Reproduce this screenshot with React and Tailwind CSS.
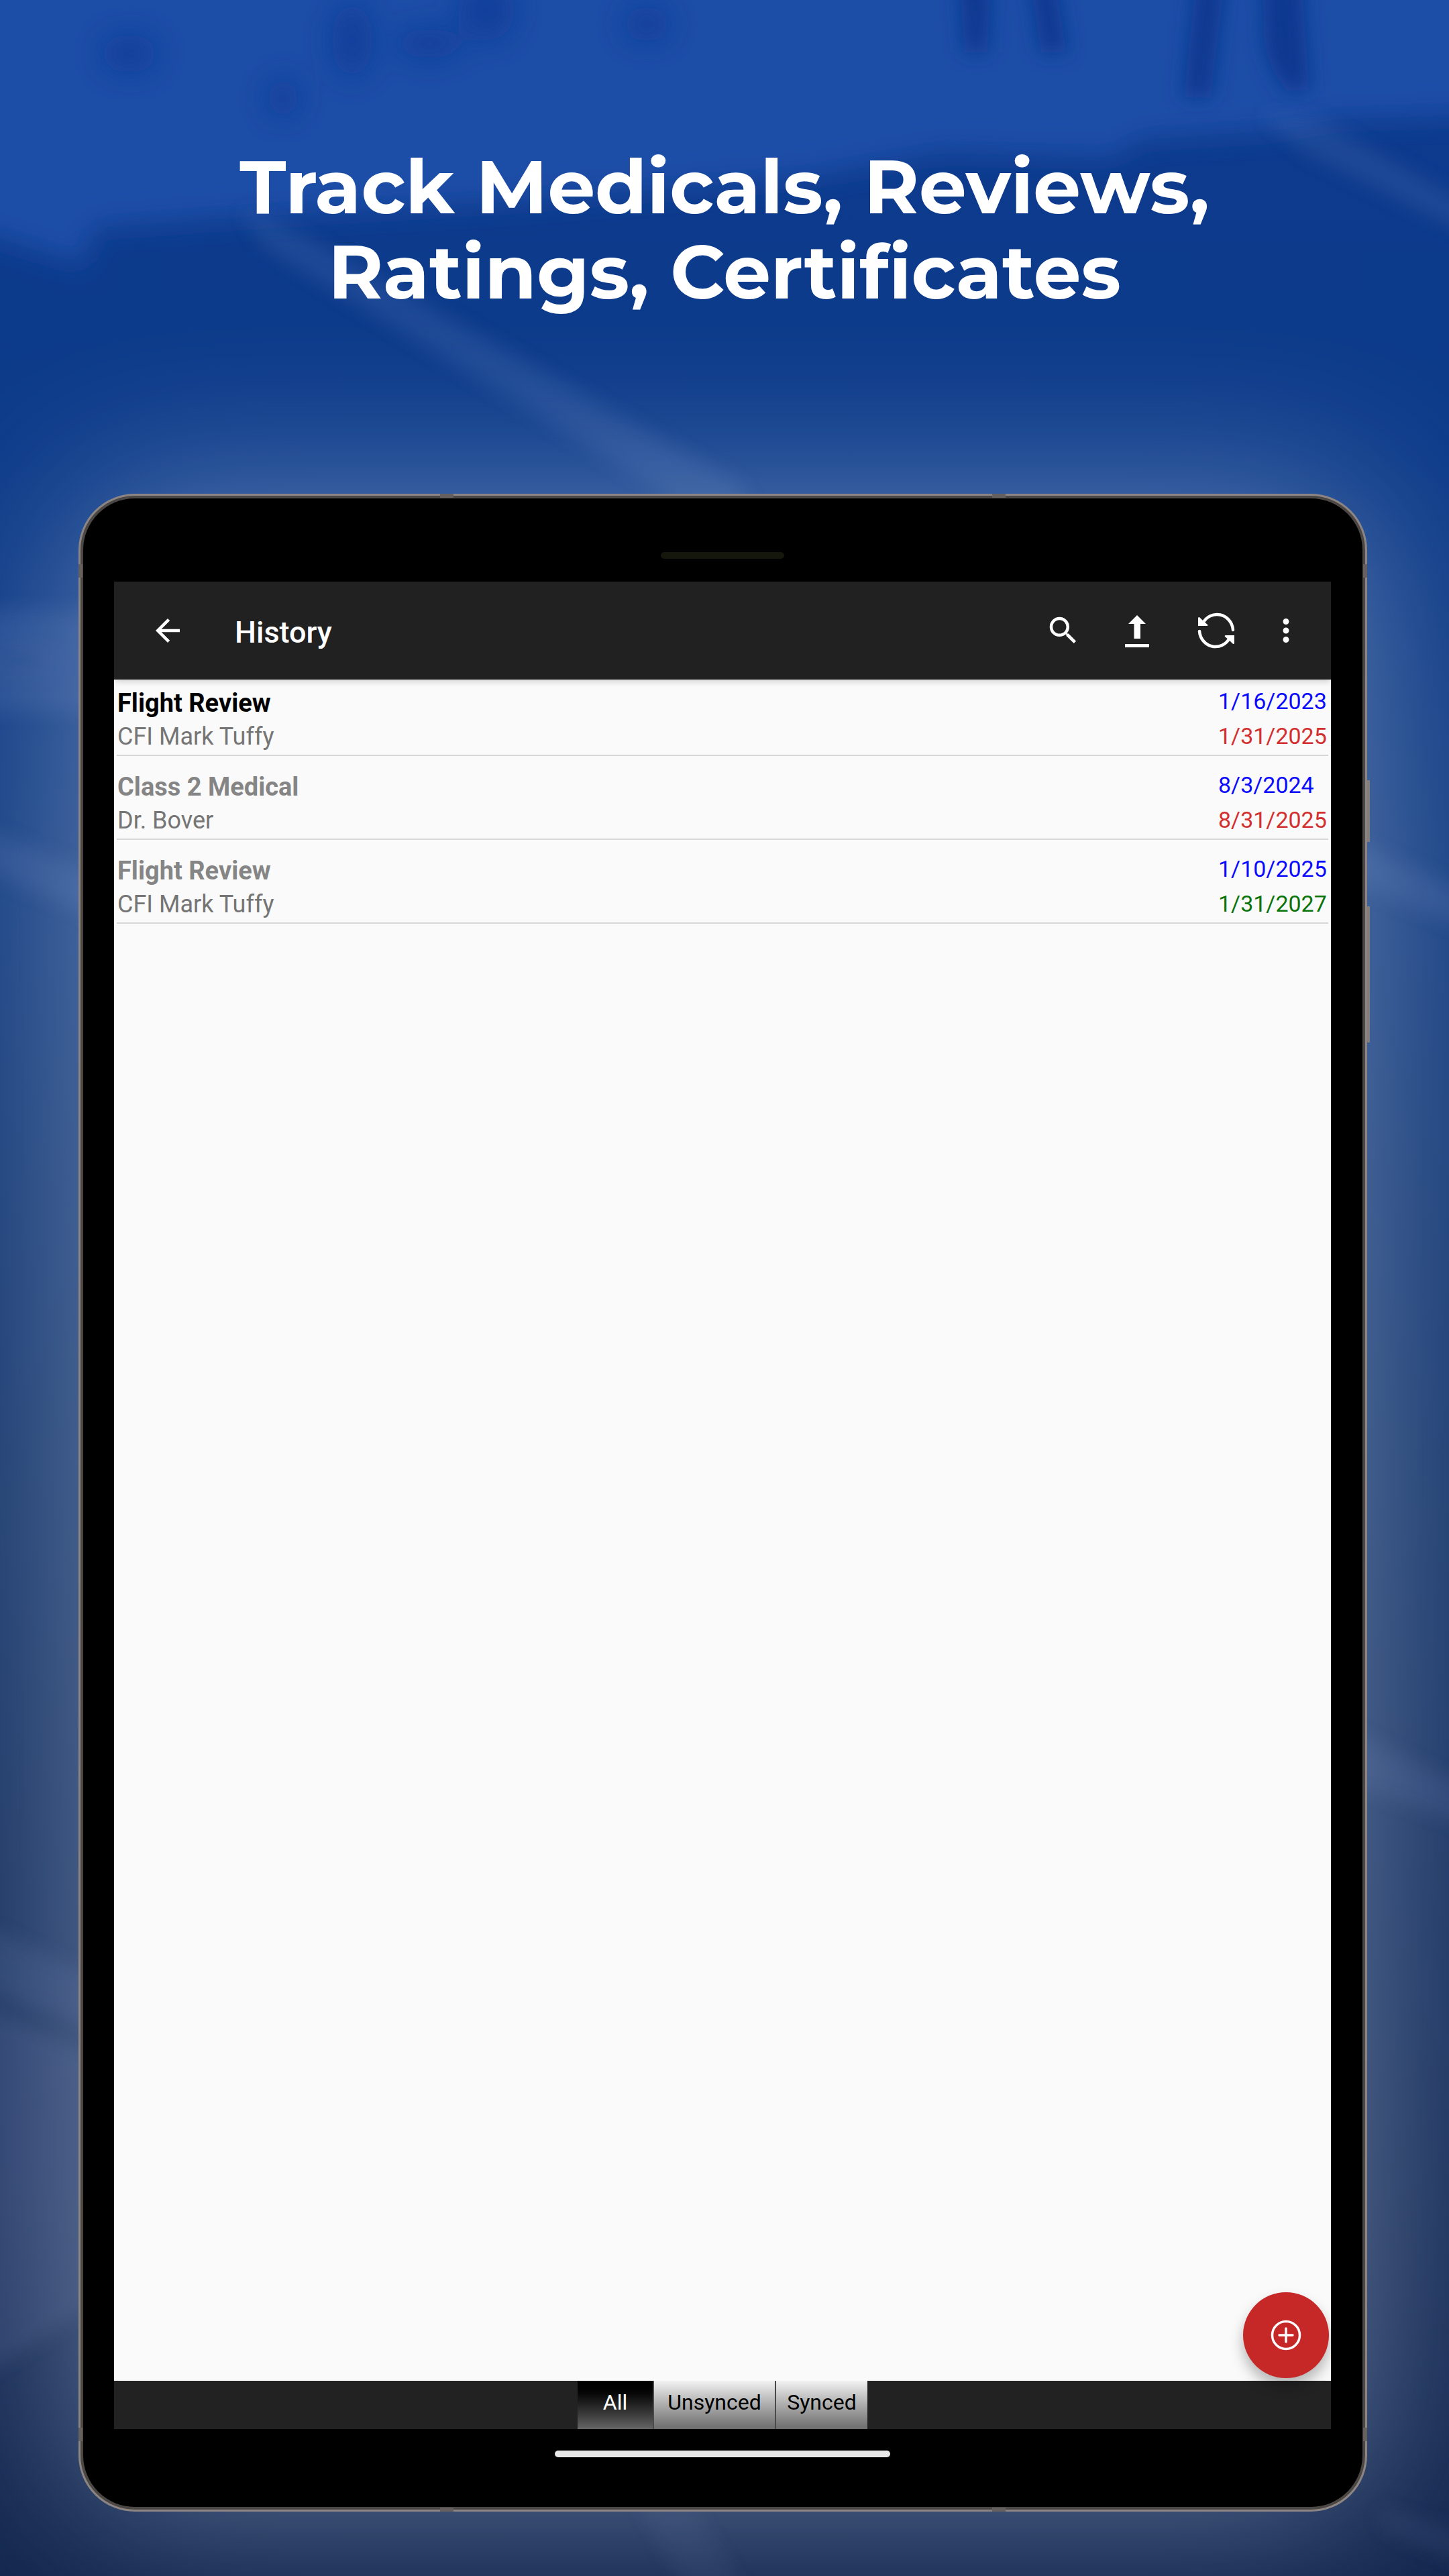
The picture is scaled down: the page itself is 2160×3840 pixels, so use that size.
import { useState } from "react";
import { MdArrowBack, MdMoreVert, MdSearch } from "react-icons/md";

const records = [
    { id: 1, title: "Flight Review", name: "CFI Mark Tuffy", date: "1/16/2023", expires: "1/31/2025", titleColor: "text-black", expiresColor: "text-[#d32f2f]" },
    { id: 2, title: "Class 2 Medical", name: "Dr. Bover", date: "8/3/2024", expires: "8/31/2025", titleColor: "text-[#858585]", expiresColor: "text-[#d32f2f]" },
    { id: 3, title: "Flight Review", name: "CFI Mark Tuffy", date: "1/10/2025", expires: "1/31/2027", titleColor: "text-[#858585]", expiresColor: "text-[#0a730a]" },
]

const tabs = [
    { label: "All", width: "w-[114px]" },
    { label: "Unsynced", width: "w-[182px]" },
    { label: "Synced", width: "w-[136px]" },
]

function Backdrop() {
    return (
        <svg className="absolute inset-0 w-full h-full" viewBox="0 0 2160 3840" preserveAspectRatio="none" aria-hidden="true">
            <defs>
                <linearGradient id="ground" x1="0" y1="0" x2="0" y2="1">
                    <stop offset="0" stopColor="#0d3a8f" />
                    <stop offset="0.18" stopColor="#0d3b89" />
                    <stop offset="0.35" stopColor="#1a4284" />
                    <stop offset="0.6" stopColor="#1d3b6d" />
                    <stop offset="0.85" stopColor="#1b315b" />
                    <stop offset="1" stopColor="#12264e" />
                </linearGradient>
                <filter id="soft" x="-20%" y="-20%" width="140%" height="140%">
                    <feGaussianBlur stdDeviation="14" />
                </filter>
                <filter id="softer" x="-20%" y="-20%" width="140%" height="140%">
                    <feGaussianBlur stdDeviation="20" />
                </filter>
            </defs>
            <rect width="2160" height="3840" fill="url(#ground)" />
            {/* Lit apron */}
            <path
                d="M-80 -80H2240V170L1990 178L1900 195L1700 208L1660 235L1400 228L1200 265L760 300L340 325L140 340L125 395L-80 330Z"
                fill="#1e4ea7"
                filter="url(#softer)"
            />
            <g filter="url(#soft)" fill="#0a3890">
                <path d="M1428 -60H1478L1472 78H1438Z" />
                <path d="M1530 -60H1568L1590 78H1552Z" />
                <path d="M1785 -60H1830L1805 145H1765Z" />
                <path d="M1882 -60H1938L1952 135H1918Q1885 95 1884 50Z" />
            </g>
            <g filter="url(#softer)" fill="#0f3b97" opacity="0.75">
                <ellipse cx="193" cy="80" rx="42" ry="28" />
                <ellipse cx="525" cy="60" rx="30" ry="55" />
                <ellipse cx="725" cy="15" rx="42" ry="46" />
                <ellipse cx="640" cy="65" rx="50" ry="22" />
                <ellipse cx="964" cy="36" rx="34" ry="26" />
                <ellipse cx="422" cy="146" rx="24" ry="28" />
            </g>
            <g filter="url(#soft)">
                {/* Taxiway lines */}
                <g fill="#8aa0d8">
                    <path d="M360 310L460 355L1110 725V760H1030L560 470L390 365Z" opacity="0.14" />
                    <path d="M1880 170L1970 180L2200 310V355L1940 225Z" opacity="0.13" />
                    <path d="M-40 910H180V1060H-40Z" opacity="0.13" />
                    <path d="M-40 1228L180 1318V1385L-40 1290Z" opacity="0.13" />
                    <path d="M2000 1245L2200 1335V1390L2000 1310Z" opacity="0.13" />
                    <path d="M2000 2575L2200 2670V2725L2000 2655Z" opacity="0.12" />
                    <path d="M-40 2865L180 2965V3040L-40 2960Z" opacity="0.12" />
                </g>
                <path d="M-40 2985L180 3080V3410L-40 3550Z" fill="#8a93d0" opacity="0.14" />
                <ellipse cx="30" cy="985" rx="45" ry="14" fill="#12408a" opacity="0.45" />
                <path d="M950 3730H1030L1120 3880H1030Z" fill="#8a93d0" opacity="0.08" />
                <path d="M2060 3740L2200 3780V3830L2060 3770Z" fill="#8a93d0" opacity="0.1" />
            </g>
        </svg>
    )
}

function UploadIcon() {
    return (
        <svg width="54" height="54" viewBox="0 0 54 54" fill="currentColor" aria-hidden="true">
            <path d="M27 4L40 17H32V39H22.500V17H14Z" />
            <rect x="9" y="47" width="36" height="5" />
        </svg>
    )
}

function SyncIcon() {
    return (
        <svg width="56" height="56" viewBox="0 0 56 56" fill="none" stroke="currentColor" strokeWidth="4.500" strokeLinecap="round" aria-hidden="true">
            <path d="M53 27A24 25 0 0 0 8 17" />
            <path d="M3 29A24 25 0 0 0 48 39" />
            <path d="M1 9Q2 7 4 9L8 13L15 19Q16 21 14 21H1Z" fill="currentColor" stroke="none" />
            <path d="M55 47Q54 49 52 47L48 43L41 37Q40 35 42 35H55Z" fill="currentColor" stroke="none" />
        </svg>
    )
}

function AppBar() {
    return (
        <header className="relative z-10 h-[146px] shrink-0 bg-[#212121] text-white flex items-center pl-[53px] pr-[25px] shadow-[0_2px_10px_rgba(0,0,0,0.2)]">
            <button aria-label="Back">
                <MdArrowBack className="w-[54px] h-[54px]" />
            </button>
            <h2 className="ml-[73px] pt-[5px] flex-1 text-[45px] leading-[54px] font-medium">History</h2>
            <button aria-label="Search" className="w-[108px] flex justify-center">
                <MdSearch className="w-[54px] h-[54px]" />
            </button>
            <button aria-label="Upload" className="w-[112px] flex justify-center">
                <UploadIcon />
            </button>
            <button aria-label="Sync" className="w-[124px] flex justify-center">
                <SyncIcon />
            </button>
            <button aria-label="More options" className="w-[84px] flex justify-center">
                <MdMoreVert className="w-[54px] h-[54px]" />
            </button>
        </header>
    )
}

function RecordRow({ record }) {
    return (
        <li className="h-[125px] first:h-[114px] flex items-end justify-between pb-[2px] border-b-2 border-[#d6d6d6]">
            <div className="pl-[1px]">
                <h3 className={`text-[38px] leading-[50px] font-bold ${record.titleColor}`}>{record.title}</h3>
                <p className="text-[36px] leading-[50px] text-[#757575]">{record.name}</p>
            </div>
            <div className="w-[164px] text-[34px] leading-[52px]">
                <p className="text-[#0a0aff]">{record.date}</p>
                <p className={record.expiresColor}>{record.expires}</p>
            </div>
        </li>
    )
}

function TabBar() {
    const [active, setActive] = useState("All")

    return (
        <nav className="h-[72px] shrink-0 bg-[#222222] flex justify-center">
            {tabs.map((tab) => (
                <button
                    key={tab.label}
                    onClick={() => setActive(tab.label)}
                    className={`${tab.width} pb-[8px] text-[32px] leading-[40px] border-r-2 border-[#4a4a4a] last:border-r-0 bg-linear-to-b ${
                        active === tab.label ? "from-black to-[#666666] text-white" : "from-[#f2f2f2] to-[#6c6c6c] text-black"
                    }`}
                >
                    {tab.label}
                </button>
            ))}
        </nav>
    )
}

function Tablet({ children }) {
    return (
        <div className="relative flex-1 flex flex-col ml-[117px] mr-[122px] mb-[96px] rounded-[84px] border-[3px] border-[#8c8583] bg-[#4b4744] p-[4px] shadow-[0_0_340px_rgba(185,202,228,0.46)]">
            {/* Side keys */}
            <div className="absolute -right-[7px] top-[424px] w-[4px] h-[92px] bg-[#857e7a]" />
            <div className="absolute -right-[7px] top-[612px] w-[4px] h-[203px] bg-[#857e7a]" />
            {/* Antenna bands */}
            <div className="absolute -top-[3px] left-[28%] w-[20px] h-[6px] bg-[#66615f]" />
            <div className="absolute -top-[3px] right-[28%] w-[20px] h-[6px] bg-[#66615f]" />
            <div className="absolute -bottom-[3px] left-[28%] w-[20px] h-[6px] bg-[#66615f]" />
            <div className="absolute -bottom-[3px] right-[28%] w-[20px] h-[6px] bg-[#66615f]" />
            <div className="absolute top-[102px] -left-[3px] w-[6px] h-[20px] bg-[#66615f]" />
            <div className="absolute top-[102px] -right-[3px] w-[6px] h-[20px] bg-[#66615f]" />
            <div className="absolute bottom-[102px] -left-[3px] w-[6px] h-[20px] bg-[#66615f]" />
            <div className="absolute bottom-[102px] -right-[3px] w-[6px] h-[20px] bg-[#66615f]" />

            <div className="flex-1 flex flex-col rounded-[77px] bg-black pl-[46px] pr-[47px]">
                <div className="h-[124px] flex justify-center items-end pb-[34px]">
                    <div className="w-[184px] h-[10px] rounded-full bg-[#15160c]" />
                </div>
                {children}
                <div className="h-[116px] pt-[32px] flex justify-center">
                    <div className="w-[500px] h-[10px] rounded-full bg-[#e8e8e8]" />
                </div>
            </div>
        </div>
    )
}

export default function App() {
    return (
        <div className="relative min-h-screen flex flex-col overflow-hidden">
            <Backdrop />
            <h1 className="relative z-10 pt-[215px] pb-[267px] text-center text-white font-bold text-[112px] leading-[127px] font-[Montserrat,Inter,sans-serif]">
                Track Medicals, Reviews,
                <br />
                Ratings, Certificates
            </h1>
            <Tablet>
                <div className="relative flex-1 flex flex-col bg-[#fafafa] font-[Roboto,sans-serif]">
                    <AppBar />
                    <main className="flex-1">
                        <ul className="mx-[4px]">
                            {records.map((record) => (
                                <RecordRow key={record.id} record={record} />
                            ))}
                        </ul>
                    </main>
                    <TabBar />
                    <button
                        aria-label="Add record"
                        className="absolute right-[3px] bottom-[76px] w-[128px] h-[128px] rounded-full bg-[#c62828] text-white flex items-center justify-center shadow-[0_12px_20px_rgba(0,0,0,0.28)]"
                    >
                        <svg width="46" height="46" viewBox="0 0 46 46" fill="none" stroke="currentColor" strokeWidth="3.500" strokeLinecap="round" aria-hidden="true">
                            <circle cx="23" cy="23" r="20.500" />
                            <path d="M23 13V33M13 23H33" />
                        </svg>
                    </button>
                </div>
            </Tablet>
        </div>
    )
}
